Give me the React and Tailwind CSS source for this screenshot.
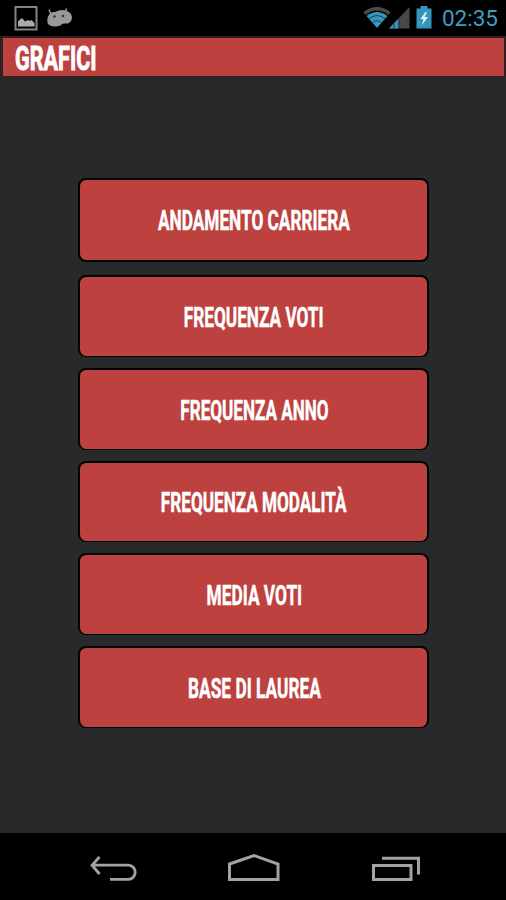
const charts = [
  { label: 'Andamento carriera', stretch: 'scale-x-[0.615]', box: 'h-[84px] mb-[13px] border-b-2' },
  { label: 'Frequenza voti', stretch: 'scale-x-[0.615]', box: 'h-[82px] mb-[11px] border-b' },
  { label: 'Frequenza anno', stretch: 'scale-x-[0.61]', box: 'h-[82px] mb-[11px] border-b' },
  { label: 'Frequenza modalità', stretch: 'scale-x-[0.612]', box: 'h-[81px] mb-[11px] border-b' },
  { label: 'Media voti', stretch: 'scale-x-[0.618]', box: 'h-[82px] mb-[11px] border-b' },
  { label: 'Base di laurea', stretch: 'scale-x-[0.618]', box: 'h-[82px] border-b' },
]

function PictureIcon() {
  return (
    <svg width="24" height="25" viewBox="0 0 24 25" fill="none">
      <rect x="1.500" y="1" width="21" height="22.5" stroke="#858585" strokeWidth="2" />
      <path d="M4 20.500v-5l3.500-3.500 2 1.500 1.500 2 3-1.500 2 1 1.500-1 3 3v3.500z" fill="#aaa" />
    </svg>
  )
}

function AndroidIcon() {
  return (
    <svg width="26" height="20" viewBox="0 0 26 20">
      <path d="M2 1.500l2 5M19.500 .5l-1 4" stroke="#999" strokeWidth="1.500" />
      <path d="M3 5.500Q5 3.500 8 4L12 2.500Q16 1.500 20 3Q25 5 25 10Q24.500 14 21 15.500H17Q15 15.500 13.500 17.500Q9 19 4 18Q0 16.500 .3 12.500Q.5 8 3 5.500z" fill="#999" />
      <circle cx="7.500" cy="8.500" r="1.300" fill="#333" />
      <circle cx="16" cy="8" r="1.300" fill="#333" />
    </svg>
  )
}

function WifiIcon() {
  return (
    <svg width="28" height="22" viewBox="0 0 28 22" fill="none">
      <path d="M1.500 6.500Q14-3 26.500 6.500" stroke="#4b4b4b" strokeWidth="3.500" />
      <path d="M3.500 9Q14 1 24.500 9L14 21z" fill="#3595ba" />
      <path d="M5.500 12Q14 5 22.500 12M9 16Q14 11.500 19 16" stroke="#174254" strokeWidth="1" />
    </svg>
  )
}

function SignalIcon() {
  return (
    <svg width="21" height="22" viewBox="0 0 21 22">
      <path d="M20.500 0v21.500H0z" fill="#494949" />
      <path d="M9.500 11.500v10H0z" fill="#3595ba" />
      <path d="M5 15v7M9.800 10v12" stroke="#102f3b" strokeWidth=".8" />
    </svg>
  )
}

function BatteryIcon() {
  return (
    <svg width="16" height="23" viewBox="0 0 16 23">
      <path d="M4.500 0h7v2.500H15.500v20H.5v-20h4z" fill="#3595ba" />
      <path d="M9.500 6L4.500 13h3l-1.500 6 6-8H8.500l2.500-5z" fill="#e4f5fb" />
    </svg>
  )
}

function StatusBar() {
  return (
    <header className="flex h-9 shrink-0 items-start bg-black pl-3.5 pr-2">
      <div className="flex gap-2 pt-1.5">
        <PictureIcon />
        <div className="pt-0.5 pl-px">
          <AndroidIcon />
        </div>
      </div>
      <div className="ml-auto flex pt-1.5">
        <div className="pt-px">
          <WifiIcon />
        </div>
        <div className="-ml-0.5 pt-px">
          <SignalIcon />
        </div>
        <div className="ml-1.5">
          <BatteryIcon />
        </div>
        <span className="ml-2.5 font-[Roboto,sans-serif] text-[22.5px] leading-[25px] text-[#3b9fc5]">02:35</span>
      </div>
    </header>
  )
}

function NavBar() {
  return (
    <nav className="flex h-[67px] shrink-0 items-start bg-black pt-5 pl-[89px]">
      <svg width="48" height="29" viewBox="0 0 48 29" fill="none" stroke="#a3a3a3" strokeWidth="2.800">
        <path d="M10.500 4L3 12.200 10.500 21M3 12.200h36.500a6.600 7 0 0 1 0 14.200H21" />
      </svg>
      <svg className="ml-[90px]" width="54" height="29" viewBox="0 0 54 29" fill="none" stroke="#a3a3a3" strokeWidth="3">
        <path d="M2.500 11L27 2.500 51 11v15.500H2.500z" />
      </svg>
      <svg className="ml-[90px]" width="50" height="29" viewBox="0 0 50 29" fill="none" stroke="#a3a3a3" strokeWidth="3">
        <path d="M2.500 12.500h37.500v14H2.500zM11 5.300h36.500V21.500" />
      </svg>
    </nav>
  )
}

export default function App() {
  return (
    <div className="flex h-[900px] w-[506px] flex-col overflow-hidden bg-[#28292b]">
      <StatusBar />
      <div className="flex h-[42px] shrink-0 items-center border-2 border-l-[3px] border-[#2c2226] bg-[#bc413f] pt-0.5 pl-3">
        <h1 className="origin-left scale-x-[0.635] font-[Roboto,sans-serif] text-[34px] leading-none font-bold whitespace-nowrap text-white uppercase [-webkit-text-stroke:1px_white]">
          Grafici
        </h1>
      </div>
      <main className="flex flex-1 flex-col items-center pt-[100px]">
        {charts.map(({ label, stretch, box }) => (
          <button
            key={label}
            className={`flex w-[351px] shrink-0 items-center justify-center rounded-lg border-x-2 border-t-2 border-black bg-[#bc413f] pt-0.5 pl-0.5 ${box}`}
          >
            <span className={`font-[Roboto,sans-serif] text-[28px] leading-none font-bold whitespace-nowrap text-white uppercase [-webkit-text-stroke:0.5px_white] ${stretch}`}>
              {label}
            </span>
          </button>
        ))}
      </main>
      <NavBar />
    </div>
  )
}
